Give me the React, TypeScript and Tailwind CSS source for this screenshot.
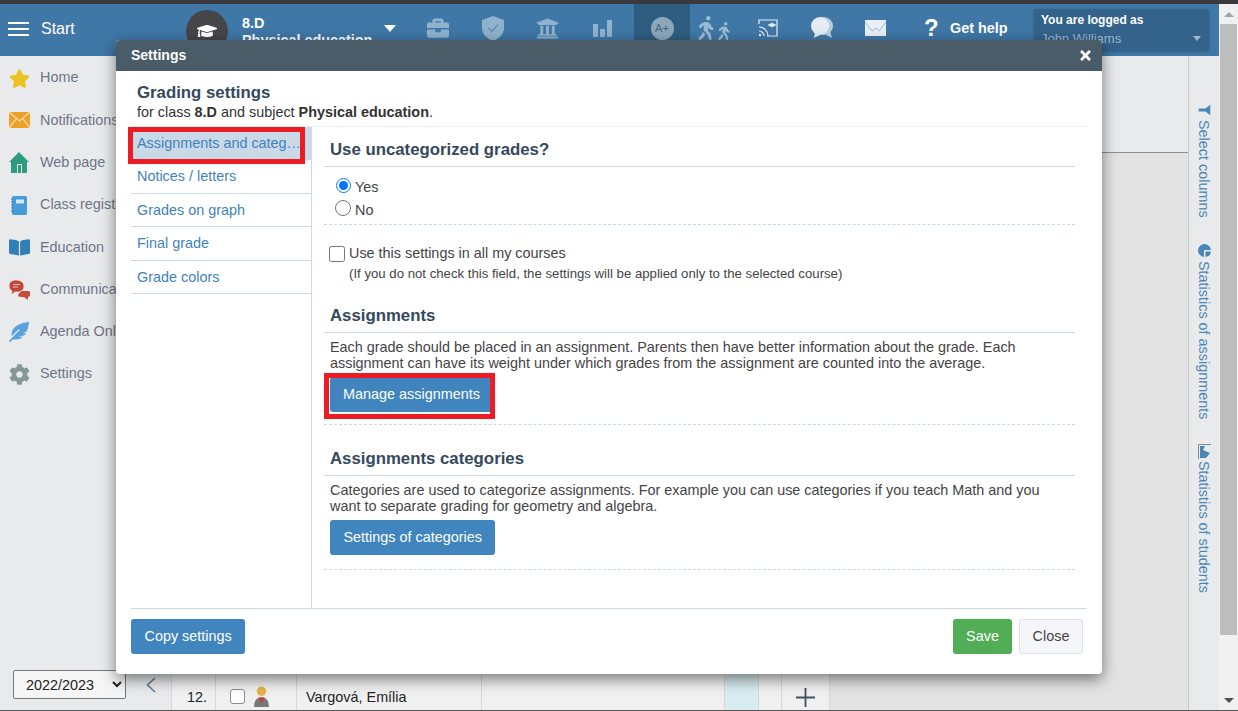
import React from "react";
import {
  FaBookOpen,
  FaBriefcase,
  FaCog,
  FaFeatherAlt,
  FaGraduationCap,
  FaStar,
  FaTimes,
  FaUniversity,
  FaWalking,
} from "react-icons/fa";

const Envelope: React.FC = () => (
  <svg width="21" height="16" viewBox="0 0 21 16">
    <rect width="21" height="16" fill="#eda12b" />
    <path d="M0 0l10.5 9L21 0M0 16l7.5-9.500M21 16l-7.500-9.500" fill="none" stroke="#fbe3b8" strokeWidth="1.200" />
  </svg>
);

const House: React.FC = () => (
  <svg width="20" height="21" viewBox="0 0 20 21">
    <path d="M10 0l10 10h-2v11H2V10H0z" fill="#2f9a80" />
    <rect x="8" y="12" width="5" height="9" fill="#cfe8e0" />
    <rect x="9" y="13" width="3" height="8" fill="#2f9a80" />
  </svg>
);

const Notebook: React.FC = () => (
  <svg width="16" height="19" viewBox="0 0 16 19">
    <rect x="1" width="15" height="19" rx="1.500" fill="#479bd8" />
    <rect x="5" y="3.500" width="8" height="4" fill="#d7e9f6" />
    <path d="M0 3h2M0 6h2M0 9h2M0 12h2M0 15h2" stroke="#2f78ae" strokeWidth="1" />
  </svg>
);

const RedChat: React.FC = () => (
  <svg width="21" height="20" viewBox="0 0 21 20">
    <path d="M12 11h8c1 0 1 1 1 2v2c0 1-1 2-2 2v3l-4-3h-3c-2 0-3-1-3-2z" fill="#c9493c" />
    <path d="M7 0c4 0 8 2 8 6s-3 6-7 6H6l-4 3 1-4C1 10 0 8 0 6c0-4 3-6 7-6z" fill="#c4463a" stroke="#e9eaec" strokeWidth="0.800" />
    <path d="M4 4.500h7M4 7h5" stroke="#eec6c1" strokeWidth="1.200" />
  </svg>
);

const Chart: React.FC = () => (
  <svg width="19" height="17" viewBox="0 0 19 17" fill="#8fb2cd">
    <rect x="0" y="4" width="5" height="13" />
    <rect x="7" y="9" width="5" height="8" />
    <rect x="14" y="0" width="5" height="17" />
  </svg>
);

const Shield: React.FC = () => (
  <svg width="22" height="25" viewBox="0 0 22 25">
    <path d="M11 0l11 4v8c0 6-4.500 10.500-11 13C4.500 22.500 0 18 0 12V4z" fill="#8fb2cd" />
    <path d="M6.500 12l3.500 3.500 6-7" fill="none" stroke="#5f8fb5" strokeWidth="1.300" />
  </svg>
);

const Cast: React.FC = () => (
  <svg width="20" height="18" viewBox="0 0 20 18" fill="none" stroke="#e6eef5" strokeWidth="1.200">
    <path d="M1 5V1h18v16H9" />
    <path d="M10 6l4-2 4 2-4 2z" fill="#e6eef5" strokeWidth="0.500" />
    <path d="M1 8a9 9 0 0 1 9 9M1 12a5 5 0 0 1 5 5" />
    <circle cx="2" cy="16" r="1.200" fill="#e6eef5" stroke="none" />
  </svg>
);

const Bubbles: React.FC = () => (
  <svg width="22" height="22" viewBox="0 0 22 22">
    <circle cx="13" cy="9" r="9" fill="#b9cfe0" />
    <path d="M19 14l2 7-6-3z" fill="#b9cfe0" />
    <circle cx="9" cy="9" r="9" fill="#e4edf4" />
    <path d="M4 15l-1 6 6-3z" fill="#e4edf4" />
  </svg>
);

const Mail: React.FC = () => (
  <svg width="21" height="16" viewBox="0 0 21 16">
    <rect width="21" height="16" fill="#e8eff5" />
    <path d="M0 2l7 9 4-3 3 3 7-9" fill="none" stroke="#9db9d0" strokeWidth="1" />
  </svg>
);

const sideItems: { label: string; icon: React.ReactNode }[] = [
  { label: "Home", icon: <FaStar className="text-[21px] text-[#ecc223]" /> },
  { label: "Notifications", icon: <Envelope /> },
  { label: "Web page", icon: <House /> },
  { label: "Class register", icon: <div className="pl-[2px]"><Notebook /></div> },
  { label: "Education", icon: <FaBookOpen className="text-[21px] text-[#2f7fb8]" /> },
  { label: "Communication", icon: <RedChat /> },
  { label: "Agenda Online", icon: <FaFeatherAlt className="text-[20px] text-[#5aa3dc]" /> },
  { label: "Settings", icon: <FaCog className="text-[21px] text-[#86979a]" /> },
];

const menuItems = ["Notices / letters", "Grades on graph", "Final grade", "Grade colors"];

const Header: React.FC = () => {
  return (
    <header className="h-[52px] shrink-0 bg-[#3f77a6] flex items-center text-white relative z-10 pb-[2px]">
      <div className="w-[21px] ml-2 flex flex-col gap-[4px]">
        <div className="h-[2px] bg-white" />
        <div className="h-[2px] bg-white" />
        <div className="h-[2px] bg-white" />
      </div>
      <span className="ml-3 text-[16px] w-[145px]">Start</span>
      <div className="w-[42px] h-[42px] mt-[4px] rounded-full bg-[#46464a] flex items-center justify-center">
        <FaGraduationCap className="text-[20px]" />
      </div>
      <div className="ml-[14px] w-[142px] mt-[5px] text-[14.400px] font-bold leading-[17px]">
        <div>8.D</div>
        <div className="whitespace-nowrap">Physical education</div>
      </div>
      <div className="w-0 h-0 border-x-[6px] border-x-transparent border-t-[7px] border-t-white -mt-[2px]" />
      <div className="ml-[14px] w-[55px] flex justify-center -mt-[2px]">
        <FaBriefcase className="text-[22px] text-[#8fb2cd]" />
      </div>
      <div className="w-[55px] flex justify-center -mt-[2px]">
        <Shield />
      </div>
      <div className="w-[55px] flex justify-center -mt-[2px]">
        <FaUniversity className="text-[23px] text-[#8fb2cd]" />
      </div>
      <div className="w-[55px] flex justify-center -mt-[2px]">
        <Chart />
      </div>
      <div className="ml-[4px] w-[56px] self-stretch -mb-[2px] bg-[#2f5d80] flex items-center justify-center">
        <div className="w-[23px] h-[23px] mb-[4px] rounded-full bg-[#8ba7bc] text-[#46657d] text-[11px] flex items-center justify-center">
          A+
        </div>
      </div>
      <div className="w-[47px] flex items-end justify-center text-[#9cbbd3] -mt-[2px]">
        <FaWalking className="text-[24px] -mr-[3px]" />
        <FaWalking className="text-[18px]" />
      </div>
      <div className="w-[62px] flex justify-center -mt-[2px]">
        <Cast />
      </div>
      <div className="w-[45px] flex justify-center -mt-[2px]">
        <Bubbles />
      </div>
      <div className="w-[63px] flex justify-center -mt-[2px]">
        <Mail />
      </div>
      <span className="ml-[17px] w-[26px] text-[24px] font-bold -mt-[2px]">?</span>
      <span className="text-[14.400px] font-bold w-[84px] whitespace-nowrap">Get help</span>
      <div className="w-[175px] h-[42px] -mb-[2px] bg-[#33628b] rounded-[3px] px-[7px] pt-[4px] relative shadow-[0_1px_3px_rgba(0,0,0,0.2)]">
        <div className="text-[12px] font-bold leading-[15px]">You are logged as</div>
        <div className="text-[13px] leading-[21px] text-[#9db7cd]">John Williams</div>
        <div className="absolute right-[8px] top-[27px] w-0 h-0 border-x-[4px] border-x-transparent border-t-[5px] border-t-[#9db7cd]" />
      </div>
    </header>
  );
};

const Sidebar: React.FC = () => {
  return (
    <aside className="w-[171px] shrink-0 bg-[#e9eaec] flex flex-col">
      <nav className="pt-[1px]">
        {sideItems.map((item) => (
          <div key={item.label} className="h-[42.300px] flex items-center text-[14.400px] text-[#6c7688] whitespace-nowrap">
            <div className="w-[40px] pl-[9px] shrink-0 flex items-center">{item.icon}</div>
            {item.label}
          </div>
        ))}
      </nav>
      <div className="mt-auto mb-[11px] ml-[13px] flex items-center">
        <select className="w-[113px] h-[29px] border border-[#767676] rounded-[2px] bg-[#f6f6f6] text-[14.400px] text-[#222] pl-[8px]">
          <option>2022/2023</option>
        </select>
        <svg width="10" height="16" viewBox="0 0 10 16" className="ml-[20px]" fill="none" stroke="#5f7d97" strokeWidth="1.600">
          <path d="M9 1L1.500 8 9 15" />
        </svg>
      </div>
    </aside>
  );
};

const TableRow: React.FC = () => {
  return (
    <div className="h-[36px] mt-auto flex text-[14.400px] text-[#222]">
      <div className="w-[45px] bg-[#f0f0f0] border-x border-[#d8d8d8] text-right pr-[8px] pt-[13px]">12.</div>
      <div className="w-[81px] bg-[#f0f0f0] border-r border-[#d8d8d8] pt-[15px] pl-[14px] flex items-start gap-[8px]">
        <div className="w-[15px] h-[15px] border border-[#8c8c8c] rounded-[3px] bg-white" />
        <svg width="17" height="21" viewBox="0 0 16 20" className="-mt-[3px]">
          <circle cx="8" cy="5" r="4.500" fill="#e6b44a" />
          <path d="M1 20c0-7 3-9 7-9s7 2 7 9z" fill="#777" />
          <path d="M5 11l3 5 3-5z" fill="#c33" />
        </svg>
      </div>
      <div className="w-[185px] bg-[#f0f0f0] border-r border-[#d8d8d8] pt-[13px] pl-[9px]">Vargová, Emília</div>
      <div className="w-[243px] bg-[#f0f0f0] border-r border-[#d8d8d8]" />
      <div className="w-[34px] bg-[#d9ecef] border-r border-[#c8dde3]" />
      <div className="w-[23px] bg-[#f0f0f0] border-r border-[#d8d8d8]" />
      <div className="w-[48px] bg-[#f0f0f0] border-r border-[#d8d8d8] flex items-center justify-center">
        <svg width="19" height="19" viewBox="0 0 19 19" stroke="#3d4f66" strokeWidth="1.800" className="mt-[10px]">
          <path d="M9.500 0v19M0 9.500h19" />
        </svg>
      </div>
    </div>
  );
};

const RightPanel: React.FC = () => {
  return (
    <aside className="w-[31px] shrink-0 bg-[#e9eaec] border-l border-[#c9c9c9] pt-[48px] text-[14.400px] leading-[18px] text-[#4a86b8] flex flex-col items-center whitespace-nowrap">
      <svg width="11" height="12" viewBox="0 0 11 12" fill="#4a86b8" className="rotate-90">
        <path d="M0 0h11L7 5v7H4V5z" />
      </svg>
      <span className="mt-[4px] [writing-mode:vertical-rl]">Select columns</span>
      <svg width="13" height="13" viewBox="0 0 13 13" fill="#4a86b8" className="mt-[26px] rotate-90">
        <path d="M6 0a6.500 6.500 0 1 0 7 7H6zM7.500 0v5.500H13A6 6 0 0 0 7.500 0z" />
      </svg>
      <span className="mt-[4px] [writing-mode:vertical-rl]">Statistics of assignments</span>
      <svg width="15" height="13" viewBox="0 0 15 13" fill="#4a86b8" className="mt-[26px] rotate-90">
        <path d="M2 11V6l4 2 3-7 5 4v6z" />
        <path d="M.500 0v12.500H15" stroke="#7a8a99" fill="none" />
      </svg>
      <span className="mt-[3px] [writing-mode:vertical-rl]">Statistics of students</span>
    </aside>
  );
};

const Scrollbar: React.FC = () => {
  return (
    <div className="w-[19px] shrink-0 bg-[#f1f1f1] flex flex-col relative z-10 pl-[1px]">
      <div className="h-[20px] w-[17px] flex items-center justify-center">
        <div className="w-0 h-0 border-x-[5px] border-x-transparent border-b-[5px] border-b-[#a3a3a3]" />
      </div>
      <div className="w-[17px] h-[611px] bg-[#bdbdbd]" />
      <div className="mt-auto h-[20px] w-[17px] flex items-center justify-center">
        <div className="w-0 h-0 border-x-[5px] border-x-transparent border-t-[5px] border-t-[#505050]" />
      </div>
    </div>
  );
};

const Section: React.FC<{ title: string; className?: string; children: React.ReactNode }> = (props) => {
  return (
    <section className={props.className}>
      <h3 className="text-[16.800px] leading-[20px] font-bold text-[#34495e] pt-[1px] pb-[6px] pl-[6px] border-b border-[#c9d9e8]">{props.title}</h3>
      {props.children}
    </section>
  );
};

const Button: React.FC<{ className: string; children: React.ReactNode }> = (props) => {
  return (
    <button className={"h-[35px] rounded-[3px] text-[14.400px] whitespace-nowrap " + props.className}>{props.children}</button>
  );
};

const Modal: React.FC = () => {
  return (
    <div className="absolute left-[116px] top-[40px] w-[986px] h-[634px] z-20 bg-white rounded-[4px] shadow-[0_5px_15px_rgba(0,0,0,0.5)] flex flex-col text-[14.400px] text-[#333]">
      <div className="h-[31px] shrink-0 bg-[#495c67] rounded-t-[4px] flex items-center justify-between pl-[15px] pr-[9px] text-white">
        <span className="font-bold text-[14px]">Settings</span>
        <FaTimes className="text-[15px]" />
      </div>
      <div className="flex-1 mx-[15px] flex flex-col min-h-0">
        <div className="h-[56px] shrink-0 pl-[6px] pt-[12px] border-b border-[#eee]">
          <h2 className="text-[16.800px] leading-[20px] font-bold text-[#34495e]">Grading settings</h2>
          <p className="leading-[19px]">
            for class <b>8.D</b> and subject <b>Physical education</b>.
          </p>
        </div>
        <div className="flex flex-1 min-h-0 border-b border-[#c9d9e8]">
          <div className="w-[181px] shrink-0 border-r border-[#c9d9e8] text-[#3f83b9]">
            <div className="h-[33px] pl-[6px] flex items-center bg-[#c9d9e8] relative">
              <span className="whitespace-nowrap">Assignments and categ…</span>
              <div className="absolute left-[-3px] top-0 w-[177px] h-[37px] border-[5px] border-[#ed1c24]" />
            </div>
            {menuItems.map((item) => (
              <div key={item} className="h-[33.500px] pl-[6px] pt-[2px] flex items-center border-b border-[#c9d9e8]">
                {item}
              </div>
            ))}
          </div>
          <div className="flex-1 pl-[12px] pr-[12px] pt-[12px] text-[#444]">
            <Section title="Use uncategorized grades?">
              <div className="h-[58px] pl-[12px] pt-[9px] border-b border-dashed border-[#c9d9e8] leading-[23px]">
                <label className="flex items-center gap-[4px] h-[23px]">
                  <input type="radio" name="uncategorized" defaultChecked className="w-[15px] h-[15px] -mt-[5px]" />
                  Yes
                </label>
                <label className="flex items-center gap-[3px] h-[23px]">
                  <input type="radio" name="uncategorized" className="w-[16px] h-[16px] -mt-[5px] -ml-[1px] mr-[1px]" />
                  No
                </label>
              </div>
            </Section>
            <div className="mt-[21px] ml-[5px]">
              <label className="flex items-center gap-[4px] h-[16px]">
                <input type="checkbox" className="w-[16px] h-[16px]" />
                Use this settings in all my courses
              </label>
              <p className="ml-[20px] mt-[4px] text-[13.200px] leading-[16px] whitespace-nowrap">
                (If you do not check this field, the settings will be applied only to the selected course)
              </p>
            </div>
            <Section title="Assignments" className="mt-[23px]">
              <div className="h-[92px] border-b border-dashed border-[#c9d9e8] pl-[6px] pt-[6px]">
                <p className="leading-[16px] w-[700px]">
                  Each grade should be placed in an assignment. Parents then have better information about the grade. Each assignment can have its weight under which grades from the assignment are counted into the average.
                </p>
                <div className="relative w-fit mt-[6px]">
                  <Button className="bg-[#4085be] text-white w-[163px]">Manage assignments</Button>
                  <div className="absolute left-[-6px] top-[-4px] w-[171px] h-[46px] border-[5px] border-[#ed1c24]" />
                </div>
              </div>
            </Section>
            <Section title="Assignments categories" className="mt-[23px]">
              <div className="h-[94px] border-b border-dashed border-[#c9d9e8] pl-[6px] pt-[6px]">
                <p className="leading-[16px] w-[720px]">
                  Categories are used to categorize assignments. For example you can use categories if you teach Math and you want to separate grading for geometry and algebra.
                </p>
                <Button className="bg-[#4085be] text-white px-[13.500px] mt-[6px]">Settings of categories</Button>
              </div>
            </Section>
          </div>
        </div>
      </div>
      <div className="h-[65px] shrink-0 mx-[15px] pt-[10px] flex justify-between pr-[4px]">
        <Button className="bg-[#4085be] text-white px-[13.500px]">Copy settings</Button>
        <div className="flex gap-[7px]">
          <Button className="bg-[#52ad57] text-white w-[59px]">Save</Button>
          <Button className="bg-[#f5f6f9] border border-[#dfe1e6] text-[#444] w-[64px]">Close</Button>
        </div>
      </div>
    </div>
  );
};

export default function App() {
  return (
    <div className="w-[1238px] h-[711px] relative overflow-hidden flex flex-col font-['Liberation_Sans',Arial,sans-serif]">
      <div className="h-[4px] shrink-0 bg-[#3a3a3e]" />
      <div className="flex-1 flex min-h-0">
        <div className="flex-1 flex flex-col min-w-0">
          <Header />
          <div className="flex-1 flex min-h-0">
            <Sidebar />
            <main className="flex-1 flex flex-col bg-[#e3e3e3] min-w-0">
              <div className="h-[97px] shrink-0 bg-[#e9eaec] border-b border-[#8f8f8f]" />
              <TableRow />
            </main>
            <RightPanel />
          </div>
        </div>
        <Scrollbar />
      </div>
      <div className="h-[1px] shrink-0 bg-[#555]" />
      <Modal />
    </div>
  );
}
